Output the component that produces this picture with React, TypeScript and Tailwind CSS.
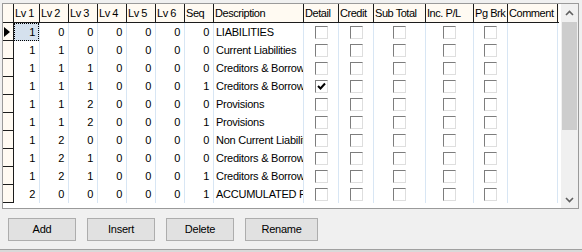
import React from 'react';

type Row = {
  lv: number[];
  seq: number;
  desc: string;
  detail?: boolean;
};

const rows: Row[] = [
  { lv: [1, 0, 0, 0, 0, 0], seq: 0, desc: 'LIABILITIES' },
  { lv: [1, 1, 0, 0, 0, 0], seq: 0, desc: 'Current Liabilities' },
  { lv: [1, 1, 1, 0, 0, 0], seq: 0, desc: 'Creditors & Borrowings' },
  { lv: [1, 1, 1, 0, 0, 0], seq: 1, desc: 'Creditors & Borrowings', detail: true },
  { lv: [1, 1, 2, 0, 0, 0], seq: 0, desc: 'Provisions' },
  { lv: [1, 1, 2, 0, 0, 0], seq: 1, desc: 'Provisions' },
  { lv: [1, 2, 0, 0, 0, 0], seq: 0, desc: 'Non Current Liabilities' },
  { lv: [1, 2, 1, 0, 0, 0], seq: 0, desc: 'Creditors & Borrowings' },
  { lv: [1, 2, 1, 0, 0, 0], seq: 1, desc: 'Creditors & Borrowings' },
  { lv: [2, 0, 0, 0, 0, 0], seq: 1, desc: 'ACCUMULATED FUNDS' },
];

// widths include the 1px right divider
const lvWidths = ['w-[26px]', 'w-[29px]', 'w-[29px]', 'w-[29px]', 'w-[29px]', 'w-[29px]'];
const checkCols = [
  { name: 'Detail', w: 'w-[35px]' },
  { name: 'Credit', w: 'w-[35px]' },
  { name: 'Sub Total', w: 'w-[52px]' },
  { name: 'Inc. P/L', w: 'w-[48px]' },
  { name: 'Pg Brk', w: 'w-[34px]' },
];

const CheckBox: React.FC<{ checked?: boolean }> = ({ checked }) => (
  <div className="w-[13px] h-[13px] bg-white border border-t-[#7d7d7d] border-l-[#7d7d7d] border-b-[#dedede] border-r-[#dedede] flex items-center justify-center">
    {checked && (
      <svg width="9" height="9" viewBox="0 0 9 9">
        <path d="M1 4 L3.5 6.5 L8 1.5" stroke="#000" strokeWidth="2" fill="none" />
      </svg>
    )}
  </div>
);

const HeaderCell: React.FC<{ w: string; children?: React.ReactNode }> = ({ w, children }) => (
  <div className={`${w} shrink-0 h-full border-r border-[#1c1c1c] pl-[1px] leading-[18px] tracking-[-0.45px] whitespace-nowrap overflow-hidden`}>
    {children}
  </div>
);

export default function App() {
  return (
    <div
      className="w-[582px] h-[252px] bg-[#f0f0f0] flex flex-col text-[11px] tracking-[-0.25px] text-black overflow-hidden"
      style={{ fontFamily: '"Liberation Sans", Arial, sans-serif' }}
    >
      <div className="ml-[2px] mt-[3px] w-[577px] h-[206px] border border-[#9a9a9a] bg-white flex">
        <div className="w-[558px] flex flex-col">
          {/* header */}
          <div className="h-[19px] flex border-b border-[#1c1c1c] bg-[#fffaf2]">
            <div className="w-[11px] shrink-0 h-full border-r border-[#1c1c1c]" />
            {lvWidths.map((w, i) => (
              <HeaderCell key={i} w={w}>
                Lv {i + 1}
              </HeaderCell>
            ))}
            <HeaderCell w="w-[29px]">Seq</HeaderCell>
            <HeaderCell w="w-[90px]">Description</HeaderCell>
            {checkCols.map(c => (
              <HeaderCell key={c.name} w={c.w}>
                {c.name}
              </HeaderCell>
            ))}
            <HeaderCell w="w-[50px]">Comment</HeaderCell>
          </div>

          {/* rows */}
          {rows.map((r, ri) => (
            <div key={ri} className="h-[18px] flex">
              <div className="w-[11px] shrink-0 h-full bg-[#fffaf2] border-r border-b border-[#1c1c1c] flex items-center pl-[1px]">
                {ri === 0 && (
                  <svg width="6" height="10" viewBox="0 0 6 10">
                    <polygon points="0,0 6,5 0,10" fill="#000" />
                  </svg>
                )}
              </div>
              {r.lv.map((v, i) => (
                <div
                  key={i}
                  className={`${lvWidths[i]} shrink-0 h-full border-r border-[#d8e6f4] flex items-center justify-end`}
                >
                  {ri === 0 && i === 0 ? (
                    <div className="w-full h-full bg-[#d5e1ee] border border-dotted border-black flex items-center justify-end pr-[3px]">
                      {v}
                    </div>
                  ) : (
                    <span className="pr-[4px]">{v}</span>
                  )}
                </div>
              ))}
              <div className="w-[29px] shrink-0 h-full border-r border-[#d8e6f4] flex items-center justify-end pr-[4px]">
                {r.seq}
              </div>
              <div className="w-[90px] shrink-0 h-full border-r border-[#d8e6f4] flex items-center pl-[2px] whitespace-nowrap overflow-hidden">
                {r.desc}
              </div>
              {checkCols.map((c, ci) => (
                <div
                  key={c.name}
                  className={`${c.w} shrink-0 h-full border-r border-[#d8e6f4] flex items-center justify-center`}
                >
                  <CheckBox checked={ci === 0 && r.detail} />
                </div>
              ))}
              <div className="w-[50px] shrink-0 h-full border-r border-[#d8e6f4]" />
            </div>
          ))}
        </div>

        <div className="w-[2px]" />

        {/* scrollbar */}
        <div className="w-[17px] bg-[#f0f0f0] flex flex-col">
          <div className="h-[17px] flex items-center justify-center">
            <svg width="9" height="6" viewBox="0 0 9 6">
              <path d="M1 5 L4.5 1.5 L8 5" stroke="#606060" strokeWidth="1.6" fill="none" />
            </svg>
          </div>
          <div className="flex-1 px-[1px] pt-[1px]">
            <div className="h-[108px] bg-[#cdcdcd]" />
          </div>
          <div className="h-[17px] flex items-center justify-center">
            <svg width="9" height="6" viewBox="0 0 9 6">
              <path d="M1 1 L4.5 4.5 L8 1" stroke="#606060" strokeWidth="1.6" fill="none" />
            </svg>
          </div>
        </div>
      </div>

      {/* buttons */}
      <div className="flex gap-[11px] pl-[8px] mt-[9px]">
        {[
          { t: 'Add', w: 'w-[68px]' },
          { t: 'Insert', w: 'w-[68px]' },
          { t: 'Delete', w: 'w-[68px]' },
          { t: 'Rename', w: 'w-[73px]' },
        ].map(b => (
          <button
            key={b.t}
            className={`${b.w} h-[23px] bg-[#e1e1e1] border border-[#adadad] text-[11px] text-black`}
          >
            {b.t}
          </button>
        ))}
      </div>

      <div className="flex-1" />
      <div className="h-[1px] bg-[#a0a0a0]" />
      <div className="h-[2px] bg-[#d9d9d9]" />
    </div>
  );
}
